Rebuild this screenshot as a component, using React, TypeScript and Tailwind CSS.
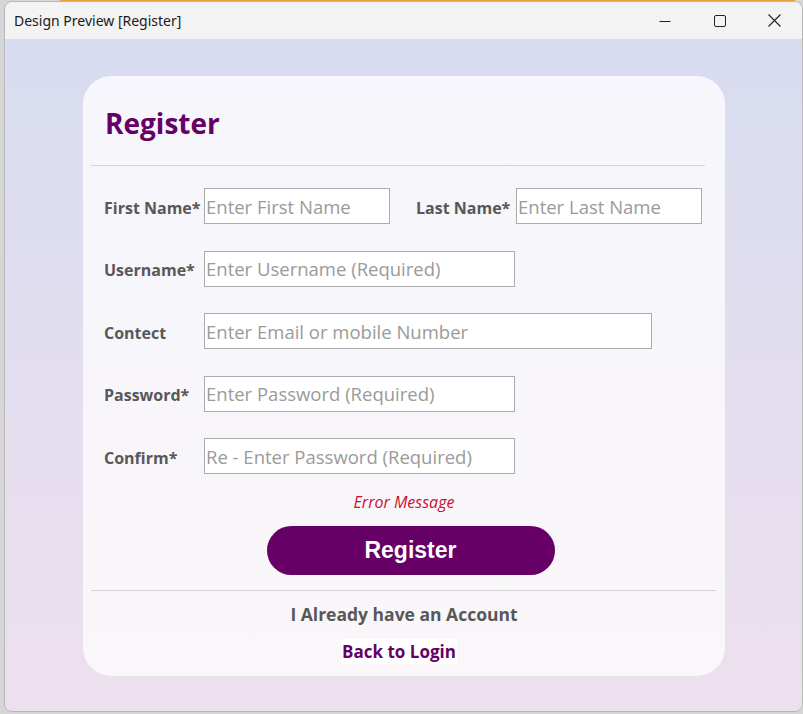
import React from "react";

const font = { fontFamily: '"Open Sans", "Noto Sans", sans-serif' };

function Field({
  label,
  placeholder,
  width,
}: {
  label: string;
  placeholder: string;
  width: string;
}) {
  return (
    <div className="flex items-center">
      <span className="w-[100px] shrink-0 pt-[3px] text-[16px] font-bold text-[#585858]">
        {label}
      </span>
      <input
        placeholder={placeholder}
        className={`${width} h-[36px] border border-[#ababab] bg-white px-[1px] text-[18.5px] text-[#555] placeholder:text-[#9a9a9a] outline-none`}
      />
    </div>
  );
}

export default function App() {
  return (
    <div className="w-[803px] h-[714px] bg-[#d6d6d6] overflow-hidden flex flex-col" style={font}>
      <div className="h-[2px] ml-[60px] mr-[8px] bg-[#e9a23b] shrink-0" />
      {/* window */}
      <div className="flex-1 ml-[4px] -mt-[1px] mb-[2px] rounded-lg border border-[#b8b8b8] overflow-hidden flex flex-col">
        {/* title bar */}
        <div className="h-[37px] shrink-0 bg-[#f3f3f3] flex items-center pl-[9px]">
          <span
            className="text-[14px] text-[#1a1a1a]"
            style={{ fontFamily: '"Noto Sans", "Open Sans", sans-serif' }}
          >
            Design Preview [Register]
          </span>
          <div className="ml-auto flex items-center">
            <div className="w-[55px] h-[37px] flex items-center justify-center">
              <svg width="12" height="12" viewBox="0 0 12 12">
                <path d="M0.5 6.5h11" stroke="#222" strokeWidth="1" />
              </svg>
            </div>
            <div className="w-[55px] h-[37px] flex items-center justify-center">
              <svg width="12" height="12" viewBox="0 0 12 12">
                <rect x="0.5" y="0.5" width="11" height="11" rx="1.5" fill="none" stroke="#222" strokeWidth="1" />
              </svg>
            </div>
            <div className="w-[55px] h-[37px] flex items-center justify-center">
              <svg width="13" height="13" viewBox="0 0 13 13">
                <path d="M0.5 0.5L12.5 12.5M12.5 0.5L0.5 12.5" stroke="#222" strokeWidth="1.1" />
              </svg>
            </div>
          </div>
        </div>

        {/* content */}
        <div className="flex-1 bg-gradient-to-b from-[#d8dcf0] to-[#ede0ee] pt-[37px] pl-[78px] pr-[77px]">
          <div className="h-[600px] rounded-[28px] bg-gradient-to-b from-[#f6f6fc] to-[#faf6fa] flex flex-col">
            <h1 className="pl-[22px] pt-[28px] text-[28px] leading-[38px] font-bold text-[#660066]">
              Register
            </h1>
            <div className="mt-[23px] ml-[8px] mr-[20px] h-px bg-[#d3d3d3]" />

            <div className="pl-[21px] pt-[22px] flex flex-col gap-[26.5px]">
              <div className="flex items-center">
                <Field label="First Name*" placeholder="Enter First Name" width="w-[186px]" />
                <div className="ml-[26px]">
                  <Field label="Last Name*" placeholder="Enter Last Name" width="w-[186px]" />
                </div>
              </div>
              <Field label="Username*" placeholder="Enter Username (Required)" width="w-[311px]" />
              <Field label="Contect" placeholder="Enter Email or mobile Number" width="w-[448px]" />
              <Field label="Password*" placeholder="Enter Password (Required)" width="w-[311px]" />
              <Field label="Confirm*" placeholder="Re - Enter Password (Required)" width="w-[311px]" />
            </div>

            <p className="mt-[17px] text-center text-[16px] italic text-[#c8102e] leading-[22px]">
              Error Message
            </p>
            <div className="mt-[13px] flex justify-center pl-[13px]">
              <button
                className="w-[288px] h-[49px] rounded-full bg-[#660066] text-white text-[23px] font-bold"
                style={{ fontFamily: '"Liberation Sans", Arial, sans-serif' }}
              >
                Register
              </button>
            </div>
            <div className="mt-[15px] ml-[8px] mr-[9px] h-px bg-[#d3d3d3]" />
            <p className="mt-[11px] text-center text-[17.5px] font-bold text-[#585858] leading-[24px]">
              I Already have an Account
            </p>
            <div className="mt-[13px] flex justify-center pr-[10px]">
              <span className="bg-white px-[1px] text-[17px] font-bold text-[#660066] leading-[25px]">
                Back to Login
              </span>
            </div>
          </div>
        </div>
      </div>
    </div>
  );
}
